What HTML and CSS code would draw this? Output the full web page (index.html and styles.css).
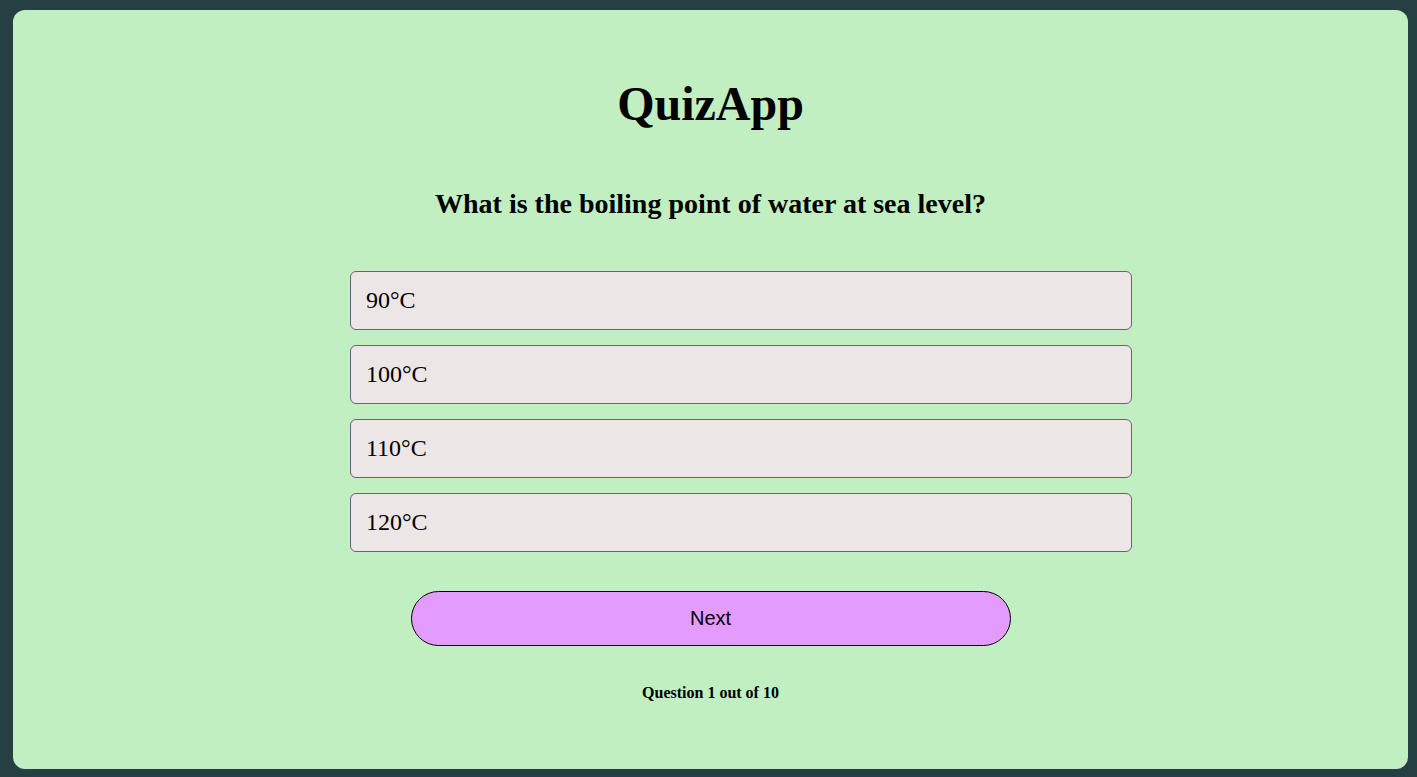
FILE: index.html
```html
<!DOCTYPE html>
<html lang="en">
<head>
<meta charset="utf-8">
<title>QuizApp</title>
<link rel="stylesheet" href="styles.css">
</head>
<body>
<main class="card">
  <h1 class="title">QuizApp</h1>
  <h2 class="question">What is the boiling point of water at sea level?</h2>
  <div class="options">
    <div class="option">90°C</div>
    <div class="option">100°C</div>
    <div class="option">110°C</div>
    <div class="option">120°C</div>
  </div>
  <button class="next">Next</button>
  <p class="progress">Question 1 out of 10</p>
</main>
</body>
</html>
```

FILE: styles.css
```css
html, body {
  margin: 0;
  height: 100%;
}
body {
  background: #263f42;
  padding: 10px 9px 8px 13px;
  box-sizing: border-box;
  font-family: "Liberation Serif", "Times New Roman", serif;
  color: #000;
}
.card {
  background: #c1efc2;
  border-radius: 12px;
  height: 100%;
  box-sizing: border-box;
  display: flex;
  flex-direction: column;
  align-items: center;
  padding-top: 64px;
}
.title {
  margin: 0;
  font-size: 48px;
  line-height: 60px;
  font-weight: bold;
}
.question {
  margin: 53px 0 0;
  font-size: 28px;
  line-height: 34px;
  font-weight: bold;
}
.options {
  width: 782px;
  padding-left: 61px;
  margin-top: 50px;
  display: flex;
  flex-direction: column;
  gap: 15px;
}
.option {
  height: 59px;
  box-sizing: border-box;
  border: 1px solid #6c5f85;
  border-radius: 6px;
  background: #ede6e6;
  font-size: 24px;
  display: flex;
  align-items: center;
  padding-left: 15px;
}
.next {
  margin-top: 39px;
  width: 600px;
  height: 55px;
  border: 1px solid #000;
  border-radius: 28px;
  background: #e39bfd;
  font-family: "Liberation Sans", Arial, sans-serif;
  font-size: 20px;
  color: #000;
}
.progress {
  margin: 37px 0 0;
  font-size: 16px;
  line-height: 20px;
  font-weight: bold;
}
```
